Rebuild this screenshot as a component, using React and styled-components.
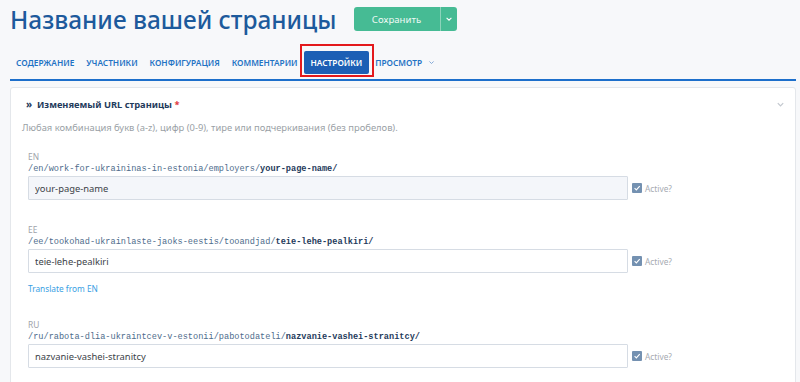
import React from "react";
import styled, { createGlobalStyle } from "styled-components";

const Global = createGlobalStyle`
  html, body { margin: 0; padding: 0; background: #f7f8fa; }
  body { font-family: "Noto Sans", "Open Sans", sans-serif; }
  * { box-sizing: border-box; }
`;

const Page = styled.div`
  padding: 0 4px 0 10px;
  height: 382px;
  overflow: hidden;
`;

const Header = styled.div`
  display: flex;
  align-items: flex-start;
  gap: 17px;
  padding-top: 2px;
  height: 44px;
`;

const Title = styled.h1`
  margin: 0;
  font-size: 24.4px;
  line-height: 36px;
  font-weight: 500;
  color: #1d5a9c;
`;

const Split = styled.div`
  display: flex;
  margin-top: 5px;
  height: 24px;
  border-radius: 3px;
  overflow: hidden;
  background: #46bb94;
`;

const SaveBtn = styled.button`
  border: 0;
  background: transparent;
  color: #eef9f4;
  font-family: inherit;
  font-size: 9.6px;
  width: 86px;
  padding: 0;
  cursor: pointer;
`;

const CaretBtn = styled.button`
  border: 0;
  border-left: 1px solid #8dd3ba;
  background: transparent;
  width: 17px;
  padding: 0;
  display: flex;
  align-items: center;
  justify-content: center;
`;

const Nav = styled.nav`
  display: flex;
  align-items: center;
  padding: 7px 0 5px;
  border-bottom: 2px solid #1d6fcb;
`;

const Tab = styled.a`
  position: relative;
  display: flex;
  align-items: center;
  gap: 6px;
  height: 23px;
  padding: 0 ${(p) => (p.$active ? "7px" : "6px")};
  font-size: 8.3px;
  font-weight: 600;
  text-transform: uppercase;
  color: ${(p) => (p.$active ? "#ffffff" : "#1f73c4")};
  background: ${(p) => (p.$active ? "#1c5fb5" : "transparent")};
  border-radius: 2px;
  white-space: nowrap;
  ${(p) =>
    p.$active &&
    `
    &::after {
      content: "";
      position: absolute;
      top: -7px;
      left: -4px;
      right: -5px;
      bottom: -3px;
      border: 2px solid #e3191c;
    }
  `}
`;

const Card = styled.section`
  margin-top: 6px;
  background: #fff;
  border: 1px solid #e4e7eb;
  border-radius: 3px;
  padding: 8px 10px 20px 11px;
  height: 320px;
`;

const CardHead = styled.div`
  display: flex;
  align-items: center;
  height: 16px;
  padding-left: 4px;
`;

const Raquo = styled.span`
  font-size: 10px;
  font-weight: 700;
  color: #1f3b5c;
  width: 11px;
`;

const CardTitle = styled.span`
  font-size: 9.3px;
  font-weight: 700;
  color: #1f3b5c;
  flex: 1;
`;

const Req = styled.span`
  color: #e0393e;
`;

const Desc = styled.p`
  margin: 8px 0 15px;
  font-size: 9.4px;
  line-height: 16px;
  color: #9a9fa6;
`;

const Fields = styled.div`
  display: flex;
  flex-direction: column;
  gap: 24px;
  padding-left: 6px;
`;

const Group = styled.div`
  display: flex;
  flex-direction: column;
`;

const Lang = styled.div`
  font-size: 8.4px;
  line-height: 12px;
  color: #9ea3aa;
`;

const Path = styled.div`
  font-family: "Liberation Mono", "DejaVu Sans Mono", monospace;
  font-size: 8.6px;
  line-height: 12px;
  color: #4e6c8c;
  margin-bottom: 1px;
  b { color: #1f3b5c; font-weight: 700; }
`;

const Row = styled.div`
  display: flex;
  align-items: center;
`;

const Input = styled.input`
  width: 600px;
  height: 24px;
  border: 1px solid #d6dce4;
  background: ${(p) => (p.$muted ? "#f4f6fa" : "#ffffff")};
  font-family: inherit;
  font-size: 9.4px;
  color: #3c4248;
  padding: 0 6px;
  border-radius: 1px;
  outline: none;
`;

const Check = styled.label`
  display: flex;
  align-items: center;
  gap: 3px;
  margin-left: 4px;
  font-size: 8.3px;
  color: #a6abb2;
`;

const Box = styled.span`
  width: 10px;
  height: 10px;
  background: #7491b1;
  border-radius: 1px;
  display: flex;
  align-items: center;
  justify-content: center;
`;

const Link = styled.a`
  margin-top: 10px;
  font-size: 8.3px;
  line-height: 12px;
  color: #3aa0e3;
`;

const Chevron = ({ color = "#fff", size = 8 }) => (
  <svg width={size} height={size} viewBox="0 0 10 10">
    <path d="M2 3.5 L5 6.5 L8 3.5" fill="none" stroke={color} strokeWidth="1.4" />
  </svg>
);

const Tick = () => (
  <svg width="8" height="8" viewBox="0 0 10 10">
    <path d="M2 5.2 L4.2 7.4 L8.4 2.6" fill="none" stroke="#fff" strokeWidth="1.4" />
  </svg>
);

const fields = [
  {
    lang: "EN",
    base: "/en/work-for-ukraininas-in-estonia/employers/",
    slug: "your-page-name/",
    value: "your-page-name",
    muted: true,
  },
  {
    lang: "EE",
    base: "/ee/tookohad-ukrainlaste-jaoks-eestis/tooandjad/",
    slug: "teie-lehe-pealkiri/",
    value: "teie-lehe-pealkiri",
    link: "Translate from EN",
  },
  {
    lang: "RU",
    base: "/ru/rabota-dlia-ukraintcev-v-estonii/pabotodateli/",
    slug: "nazvanie-vashei-stranitcy/",
    value: "nazvanie-vashei-stranitcy",
  },
];

const tabs = ["Содержание", "Участники", "Конфигурация", "Комментарии", "Настройки"];

export default function App() {
  return (
    <>
      <Global />
      <Page>
        <Header>
          <Title>Название вашей страницы</Title>
          <Split>
            <SaveBtn>Сохранить</SaveBtn>
            <CaretBtn>
              <Chevron color="#ffffff" size={8} />
            </CaretBtn>
          </Split>
        </Header>
        <Nav>
          {tabs.map((t) => (
            <Tab key={t} $active={t === "Настройки"}>
              {t}
            </Tab>
          ))}
          <Tab>
            Просмотр <Chevron color="#7fa6d6" size={7} />
          </Tab>
        </Nav>
        <Card>
          <CardHead>
            <Raquo>»</Raquo>
            <CardTitle>
              Изменяемый URL страницы <Req>*</Req>
            </CardTitle>
            <Chevron color="#c3c8cf" size={9} />
          </CardHead>
          <Desc>
            Любая комбинация букв (a-z), цифр (0-9), тире или подчеркивания (без пробелов).
          </Desc>
          <Fields>
            {fields.map((f) => (
              <Group key={f.lang}>
                <Lang>{f.lang}</Lang>
                <Path>
                  {f.base}
                  <b>{f.slug}</b>
                </Path>
                <Row>
                  <Input $muted={f.muted} defaultValue={f.value} />
                  <Check>
                    <Box>
                      <Tick />
                    </Box>
                    Active?
                  </Check>
                </Row>
                {f.link && <Link>{f.link}</Link>}
              </Group>
            ))}
          </Fields>
        </Card>
      </Page>
    </>
  );
}
